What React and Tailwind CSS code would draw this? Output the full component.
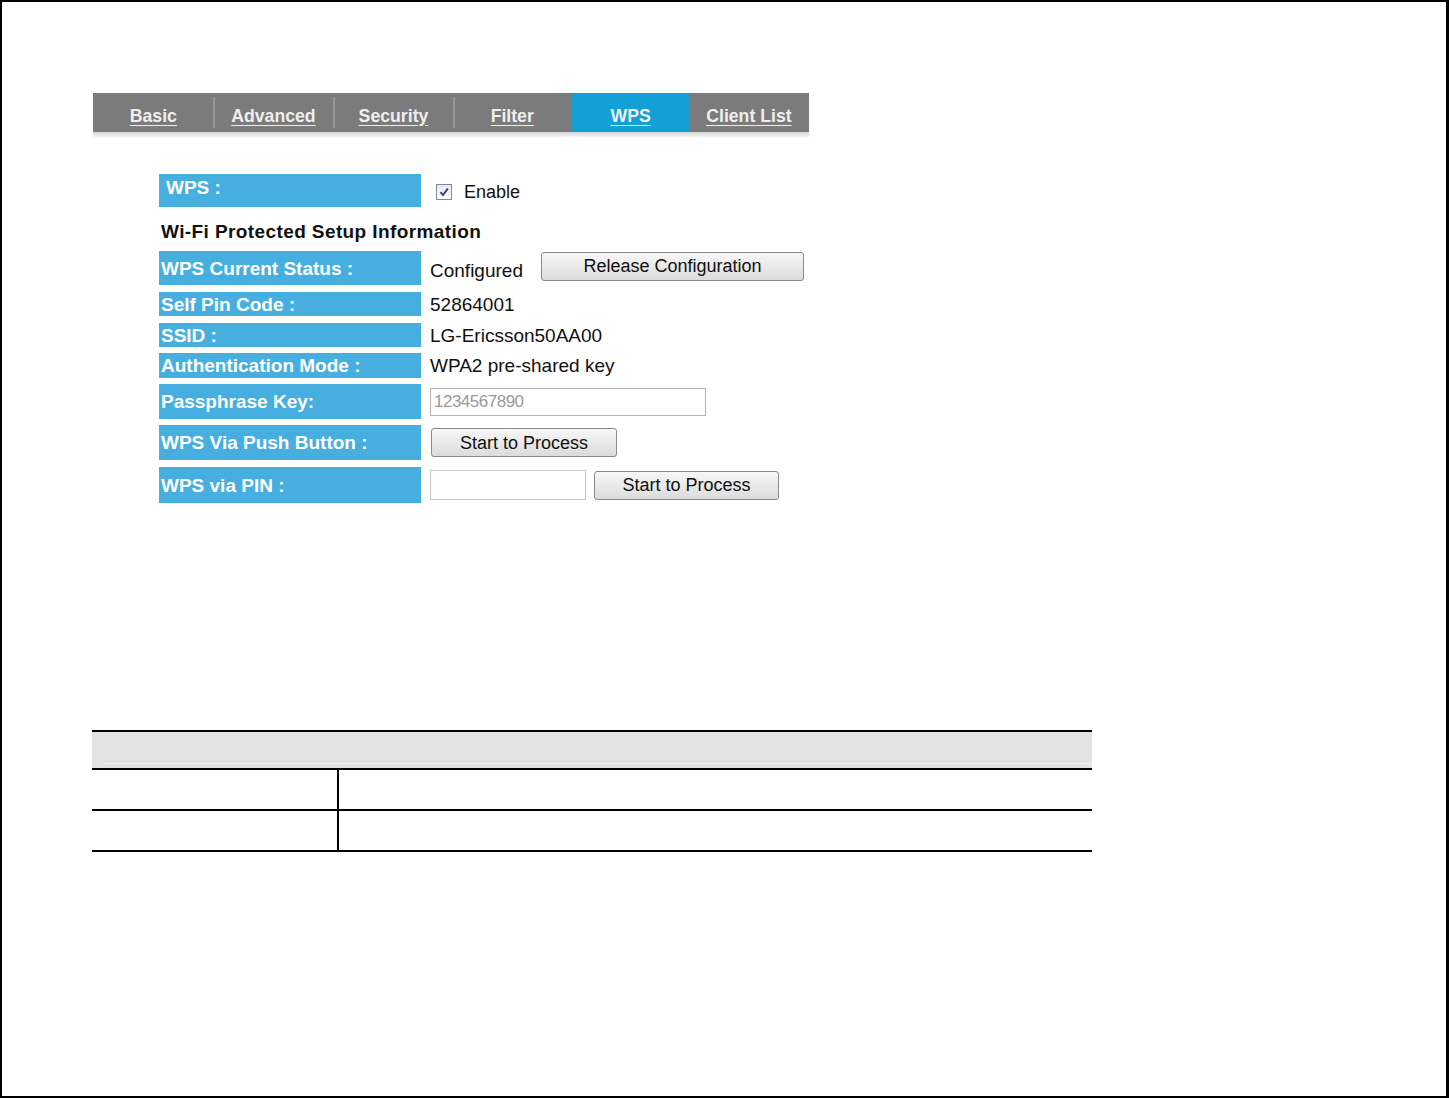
import React from "react";

const tabs = [
  { name: "Basic", w: "w-[120px]" },
  { name: "Advanced", w: "w-[120px]" },
  { name: "Security", w: "w-[120px]" },
  { name: "Filter", w: "w-[119px]" },
  { name: "WPS", w: "w-[117px]", active: true },
  { name: "Client List", w: "w-[120px]" },
];

const Label = ({ children, h, top }) => (
  <div
    className={`w-[262px] shrink-0 ${h} bg-[#46afe0] text-white font-bold text-[19px] leading-none px-[2px] flex ${
      top ? "items-start pt-[4px] pl-[7px]" : "items-center"
    }`}
  >
    {children}
  </div>
);

const Btn = ({ children, w, h = "h-[29px]" }) => (
  <button
    className={`${w} ${h} border border-[#8a8a8a] rounded-[3px] bg-gradient-to-b from-[#f7f7f7] to-[#dcdcdc] text-[18px] text-[#111] leading-none`}
  >
    {children}
  </button>
);

export default function App() {
  return (
    <div
      className="w-[1449px] h-[1098px] bg-white border-l-2 border-t-2 border-r-[3px] border-b-2 border-black relative"
      style={{ fontFamily: '"Liberation Sans", Arial, sans-serif' }}
    >
      <div className="pt-[91px] pl-[91px]">
        {/* tab bar */}
        <div className="w-[716px]">
          <div className="flex h-[39px] bg-[#7b7b7b]">
            {tabs.map((t, i) => (
              <div
                key={t.name}
                className={`${t.w} h-full flex items-center justify-center relative ${
                  t.active ? "bg-[#12a0d6]" : ""
                }`}
              >
                {i > 0 && !t.active && !tabs[i - 1].active && (
                  <span className="absolute left-0 top-[4px] bottom-[4px] w-[2px] bg-[#969696]" />
                )}
                <span className="inline-block scale-x-[0.93] text-[19px] font-bold underline underline-offset-[3px] text-[#eeeeee] pt-[7px] whitespace-nowrap">
                  {t.name}
                </span>
              </div>
            ))}
          </div>
          <div className="h-[6px] bg-gradient-to-b from-[#d4d4d4] to-white" />
        </div>

        {/* form */}
        <div className="pl-[66px] pt-[36px] flex flex-col">
          <div className="flex">
            <Label h="h-[33px]" top>
              WPS :
            </Label>
            <div className="flex items-center pl-[15px] pt-[3px] gap-[12px] text-[18px] text-[#111]">
              <span className="w-[16px] h-[16px] border border-[#7a8aa0] bg-gradient-to-b from-[#e4e8ee] to-white flex items-center justify-center">
                <svg width="12" height="12" viewBox="0 0 12 12">
                  <path d="M2.5 6.2 L5 9 L9.8 2.6" fill="none" stroke="#2a3d75" strokeWidth="1.8" />
                </svg>
              </span>
              Enable
            </div>
          </div>
          <div className="h-[44px] flex items-center pl-[2px] pt-[6px] text-[19px] tracking-[0.4px] font-bold text-[#111]">
            Wi-Fi Protected Setup Information
          </div>
          <div className="flex items-center">
            <Label h="h-[34px]">WPS Current Status :</Label>
            <span className="pl-[9px] pt-[4px] text-[19px] leading-none text-[#111]">Configured</span>
            <div className="pl-[18px] pb-[4px]">
              <Btn w="w-[263px]">Release Configuration</Btn>
            </div>
          </div>
          <div className="flex items-center mt-[7px]">
            <Label h="h-[24px]">Self Pin Code :</Label>
            <span className="pl-[9px] text-[19px] leading-none text-[#111]">52864001</span>
          </div>
          <div className="flex items-center mt-[7px]">
            <Label h="h-[24px]">SSID :</Label>
            <span className="pl-[9px] text-[19px] leading-none text-[#111]">LG-Ericsson50AA00</span>
          </div>
          <div className="flex items-center mt-[6px]">
            <Label h="h-[25px]">Authentication Mode :</Label>
            <span className="pl-[9px] text-[19px] leading-none text-[#111]">WPA2 pre-shared key</span>
          </div>
          <div className="flex items-center mt-[6px]">
            <Label h="h-[35px]">Passphrase Key:</Label>
            <div className="pl-[9px]">
              <div className="w-[276px] h-[28px] border border-[#b5b5b5] flex items-center px-[3px] text-[17px] leading-none text-[#9a9a9a] tracking-[-0.5px]">
                1234567890
              </div>
            </div>
          </div>
          <div className="flex items-center mt-[6px]">
            <Label h="h-[35px]">WPS Via Push Button :</Label>
            <div className="pl-[10px]">
              <Btn w="w-[186px]">Start to Process</Btn>
            </div>
          </div>
          <div className="flex items-center mt-[7px]">
            <Label h="h-[36px]">WPS via PIN :</Label>
            <div className="pl-[9px] flex items-center gap-[8px]">
              <div className="w-[156px] h-[30px] border border-[#c8c8c8]" />
              <Btn w="w-[185px]">Start to Process</Btn>
            </div>
          </div>
        </div>
      </div>

      {/* empty table */}
      <div className="absolute left-[90px] top-[728px] w-[1000px]">
        <div className="border-t-2 border-black bg-[#e3e3e3] h-[38px] flex items-end pl-[12px] pb-[4px]">
          <div className="w-full h-[1px] bg-[#f0f0f0]" />
        </div>
        <div className="flex border-t-2 border-black h-[41px]">
          <div className="w-[247px] border-r-2 border-black" />
          <div className="flex-1" />
        </div>
        <div className="flex border-t-2 border-black border-b-2 h-[43px]">
          <div className="w-[247px] border-r-2 border-black" />
          <div className="flex-1" />
        </div>
      </div>
    </div>
  );
}
